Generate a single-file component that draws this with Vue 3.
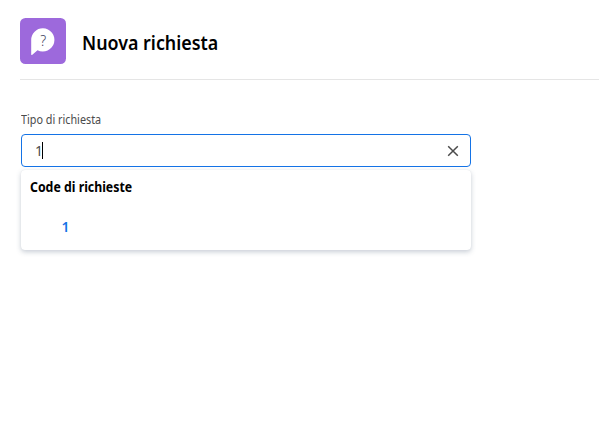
<script setup>
import { ref } from 'vue'

const query = ref('1')
const results = ref(['1'])
</script>

<template>
  <main class="page">
    <header class="header">
      <svg class="badge" viewBox="0 0 46 46" aria-hidden="true">
        <rect width="46" height="46" rx="5.500" fill="#9d69dc" />
        <path d="M22.900 10.300a11.600 11.600 0 1 1-5.400 21.900l-5.200 4.600a.65.65 0 0 1-1.100-.5V21.900A11.600 11.600 0 0 1 22.900 10.300Z" fill="#fff" />
        <text class="mark" x="23.200" y="27.500" text-anchor="middle">?</text>
      </svg>
      <h1 class="title">Nuova richiesta</h1>
    </header>
    <section class="form">
      <div class="label"><span class="label-text">Tipo di richiesta</span></div>
      <div class="field">
        <span class="value">{{ query }}</span><i class="caret"></i>
        <svg class="clear" viewBox="0 0 12 12" aria-hidden="true">
          <path d="M1.200 1.200l9.600 9.600M10.800 1.200l-9.600 9.600" />
        </svg>
      </div>
      <div class="menu">
        <div class="group"><span class="group-text">Code di richieste</span></div>
        <div v-for="item in results" :key="item" class="option">{{ item }}</div>
      </div>
    </section>
  </main>
</template>

<style>
body {
  margin: 0;
  background: #fff;
}
</style>

<style scoped>
.page {
  box-sizing: border-box;
  height: 447px;
  padding-left: 20px;
  font-family: "Noto Sans", "Open Sans", sans-serif;
  color: #000;
  overflow: hidden;
}
.header {
  box-sizing: border-box;
  display: flex;
  align-items: flex-start;
  gap: 16px;
  width: 579px;
  height: 80px;
  padding-top: 18px;
  border-bottom: 1px solid #e5e5e5;
}
.badge {
  width: 46px;
  height: 46px;
}
.mark {
  font: 300 14px "Noto Sans", sans-serif;
  fill: #3d4260;
}
.title {
  margin: 11px 0 0;
  font-size: 20px;
  line-height: 28px;
  font-weight: 600;
  white-space: nowrap;
  transform: scaleX(0.893);
  transform-origin: left;
}
.form {
  width: 450px;
  padding: 31px 0 0 1px;
}
.label {
  height: 23px;
  font-size: 12px;
  line-height: 18px;
  color: #4b4b4b;
}
.label-text,
.group-text {
  display: inline-block;
  transform: scaleX(0.9);
  transform-origin: left;
}
.group-text {
  transform: scaleX(0.88);
}
.field {
  box-sizing: border-box;
  display: flex;
  align-items: center;
  width: 449.500px;
  height: 33px;
  padding: 0 10.500px 0 13px;
  border: 1px solid #1473e6;
  border-radius: 4px;
  color: #4b4b4b;
  font-size: 14px;
}
.value {
  width: 7px;
}
.caret {
  width: 1px;
  height: 17px;
  background: #000;
}
.clear {
  width: 12px;
  height: 12px;
  margin-left: auto;
  fill: none;
  stroke: #4b4b4b;
  stroke-width: 1.5;
}
.menu {
  box-sizing: border-box;
  height: 80px;
  margin-top: 3px;
  padding-top: 7px;
  border-radius: 4px;
  box-shadow: 0 0 1px #dce0e5, 0 2px 5px rgba(70, 90, 115, 0.3);
}
.group {
  padding-left: 8.500px;
  font-size: 14px;
  line-height: 20px;
  font-weight: 700;
}
.option {
  margin-top: 20px;
  padding-left: 40.500px;
  font-size: 14px;
  line-height: 20px;
  font-weight: 600;
  color: #1473e6;
}
</style>
